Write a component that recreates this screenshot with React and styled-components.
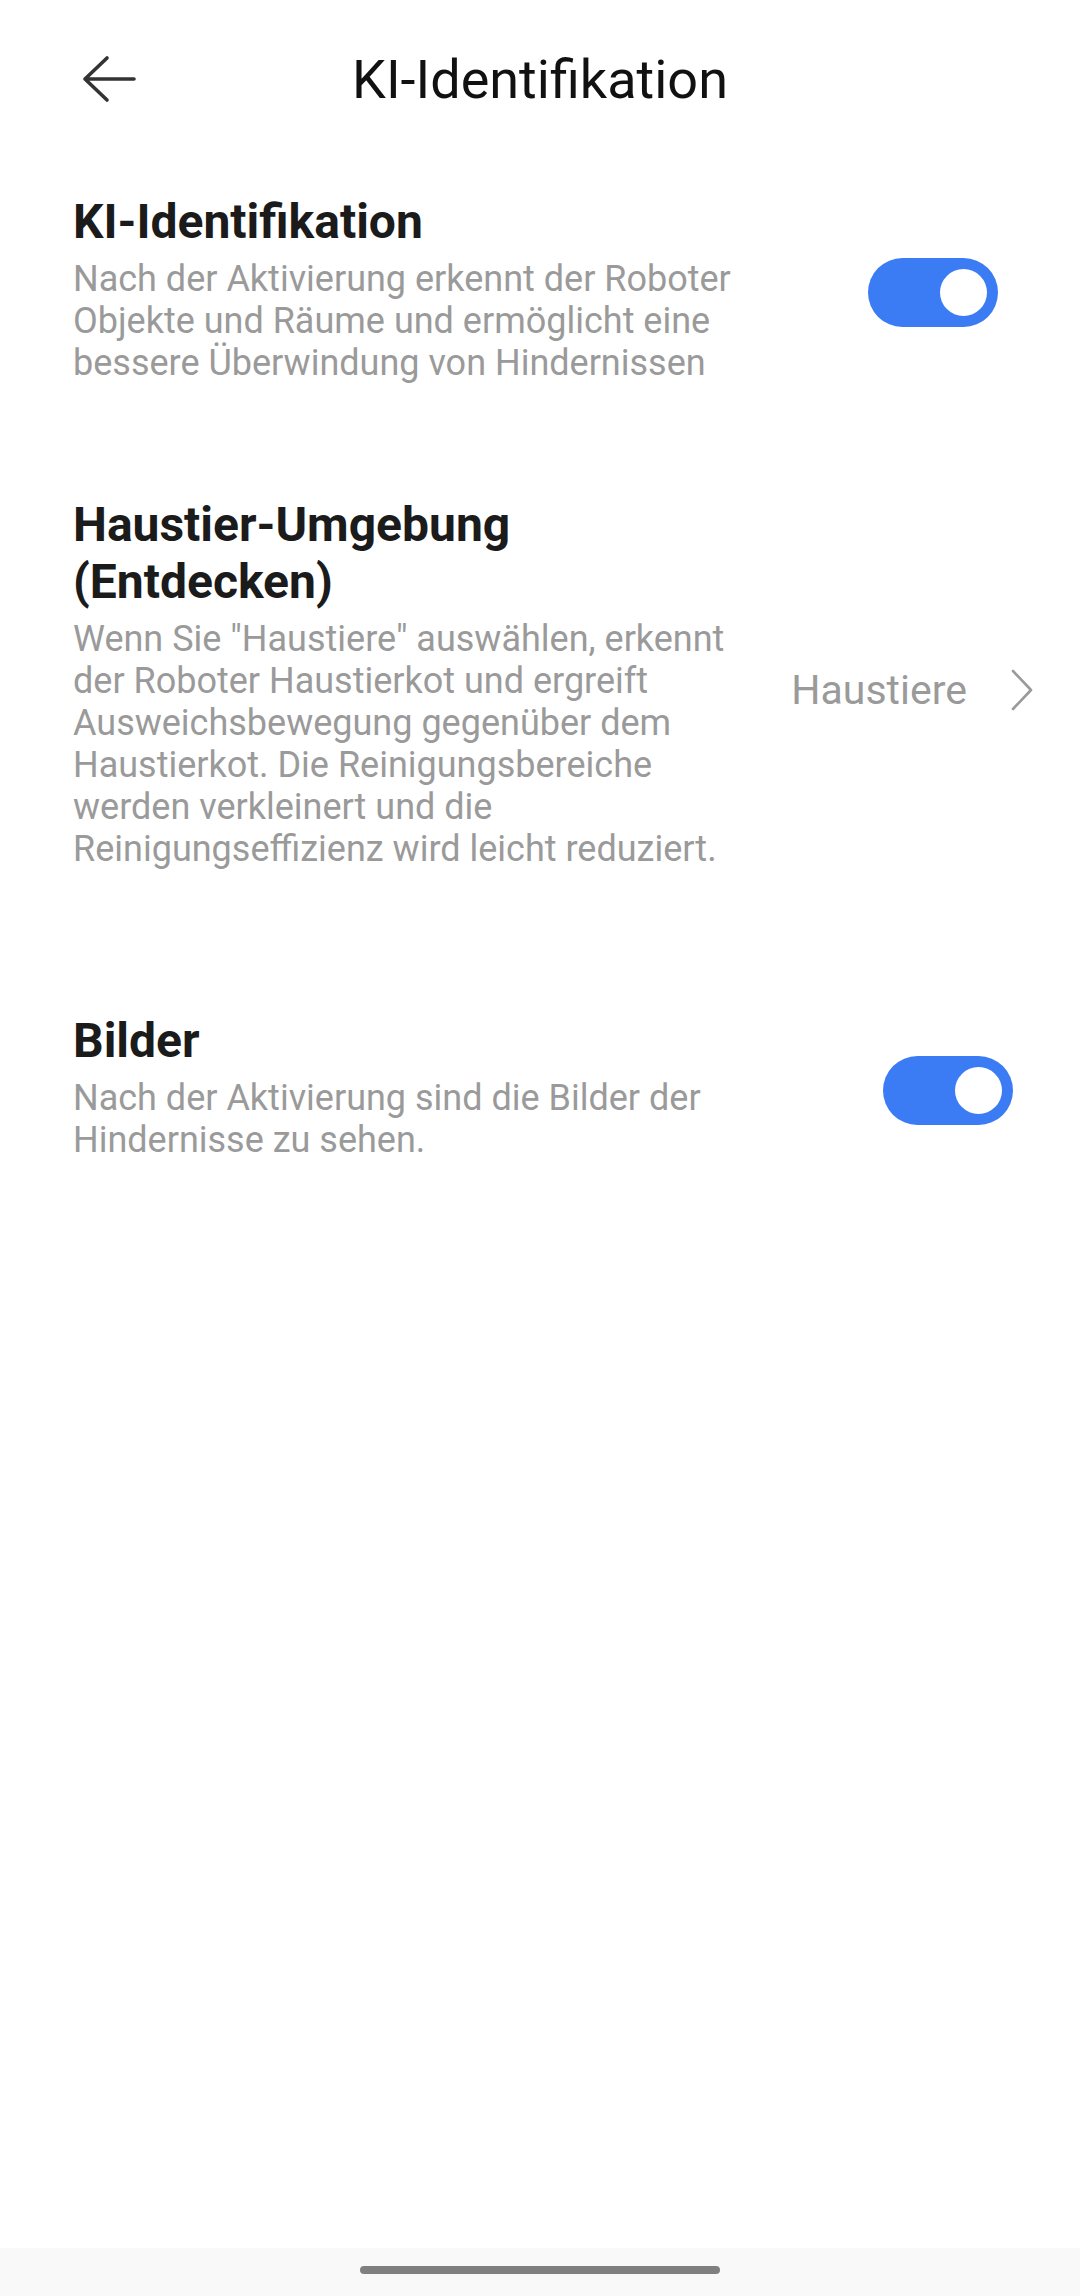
import React, { useState } from "react";
import styled, { createGlobalStyle } from "styled-components";

const GlobalStyle = createGlobalStyle`
  html, body {
    margin: 0;
    padding: 0;
    background: #ffffff;
    font-family: Roboto, "Noto Sans", sans-serif;
  }
`;

const StyledPage = styled.div`
  width: 1080px;
  height: 2296px;
  display: flex;
  flex-direction: column;
  background: #ffffff;
  overflow: hidden;
`;

const StyledHeader = styled.header`
  height: 158px;
  position: relative;
  display: flex;
  align-items: center;
  justify-content: center;
  flex-shrink: 0;
`;

const StyledBack = styled.button`
  position: absolute;
  left: 78px;
  top: 54px;
  width: 62px;
  height: 50px;
  padding: 0;
  border: none;
  background: none;
  display: flex;
  align-items: center;
  justify-content: center;
  cursor: pointer;
`;

const StyledTitle = styled.h1`
  margin: 0;
  font-size: 54px;
  font-weight: 400;
  color: #111111;
`;

const StyledContent = styled.main`
  flex: 1;
  display: flex;
  flex-direction: column;
`;

const StyledRow = styled.div`
  display: flex;
  align-items: center;
  padding: 0 ${({ $right }) => $right}px 0 73px;
  margin-top: ${({ $top }) => $top}px;
`;

const StyledText = styled.div`
  width: 676px;
  flex-shrink: 0;
  display: flex;
  flex-direction: column;
  gap: 8px;
`;

const StyledHeading = styled.div`
  font-size: 48px;
  font-weight: 700;
  line-height: 57px;
  color: #1b1b1b;
`;

const StyledDesc = styled.div`
  font-size: 36px;
  line-height: 42px;
  color: #9a9a9a;
`;

const StyledControl = styled.div`
  flex: 1;
  display: flex;
  justify-content: flex-end;
  align-items: center;
`;

const StyledSwitch = styled.button`
  width: 130px;
  height: 69px;
  padding: 0 11px;
  border: none;
  border-radius: 35px;
  background: ${({ $on }) => ($on ? "#3b7cf4" : "#d6d6d6")};
  display: flex;
  align-items: center;
  justify-content: ${({ $on }) => ($on ? "flex-end" : "flex-start")};
  cursor: pointer;
  margin-top: 8px;
`;

const StyledKnob = styled.span`
  width: 47px;
  height: 47px;
  border-radius: 50%;
  background: #ffffff;
`;

const StyledValue = styled.div`
  display: flex;
  align-items: center;
  gap: 44px;
  font-size: 41px;
  color: #9a9a9a;
  margin-top: 14px;
`;

const StyledBottom = styled.div`
  height: 48px;
  background: #f9f9f9;
  display: flex;
  align-items: center;
  justify-content: center;
  flex-shrink: 0;
`;

const StyledHandle = styled.div`
  width: 360px;
  height: 8px;
  border-radius: 4px;
  background: #808080;
  margin-bottom: 4px;
`;

const Switch = ({ on, onToggle }) => (
  <StyledSwitch $on={on} onClick={onToggle}>
    <StyledKnob />
  </StyledSwitch>
);

const BackArrow = () => (
  <svg width="58" height="48" viewBox="0 0 58 48" fill="none">
    <path
      d="M54 24H5M5 24L27 3M5 24L27 45"
      stroke="#333333"
      strokeWidth="3.6"
      strokeLinecap="round"
      strokeLinejoin="round"
    />
  </svg>
);

const Chevron = () => (
  <svg width="22" height="42" viewBox="0 0 22 42" fill="none">
    <path d="M2 2L20 21L2 40" stroke="#9a9a9a" strokeWidth="2.6" strokeLinecap="round" strokeLinejoin="round" />
  </svg>
);

const App = () => {
  const [aiOn, setAiOn] = useState(true);
  const [imagesOn, setImagesOn] = useState(true);

  return (
    <StyledPage>
      <GlobalStyle />
      <StyledHeader>
        <StyledBack aria-label="Zurück">
          <BackArrow />
        </StyledBack>
        <StyledTitle>KI-Identifikation</StyledTitle>
      </StyledHeader>

      <StyledContent>
        <StyledRow $top={35} $right={82}>
          <StyledText>
            <StyledHeading>KI-Identifikation</StyledHeading>
            <StyledDesc>
              Nach der Aktivierung erkennt der Roboter Objekte und Räume und ermöglicht eine bessere
              Überwindung von Hindernissen
            </StyledDesc>
          </StyledText>
          <StyledControl>
            <Switch on={aiOn} onToggle={() => setAiOn(!aiOn)} />
          </StyledControl>
        </StyledRow>

        <StyledRow $top={112} $right={47}>
          <StyledText>
            <StyledHeading>Haustier-Umgebung (Entdecken)</StyledHeading>
            <StyledDesc>
              Wenn Sie "Haustiere" auswählen, erkennt der Roboter Haustierkot und ergreift
              Ausweichsbewegung gegenüber dem Haustierkot. Die Reinigungsbereiche werden verkleinert
              und die Reinigungseffizienz wird leicht reduziert.
            </StyledDesc>
          </StyledText>
          <StyledControl>
            <StyledValue>
              Haustiere
              <Chevron />
            </StyledValue>
          </StyledControl>
        </StyledRow>

        <StyledRow $top={142} $right={67}>
          <StyledText>
            <StyledHeading>Bilder</StyledHeading>
            <StyledDesc>Nach der Aktivierung sind die Bilder der Hindernisse zu sehen.</StyledDesc>
          </StyledText>
          <StyledControl>
            <Switch on={imagesOn} onToggle={() => setImagesOn(!imagesOn)} />
          </StyledControl>
        </StyledRow>
      </StyledContent>

      <StyledBottom>
        <StyledHandle />
      </StyledBottom>
    </StyledPage>
  );
};

export default App;
